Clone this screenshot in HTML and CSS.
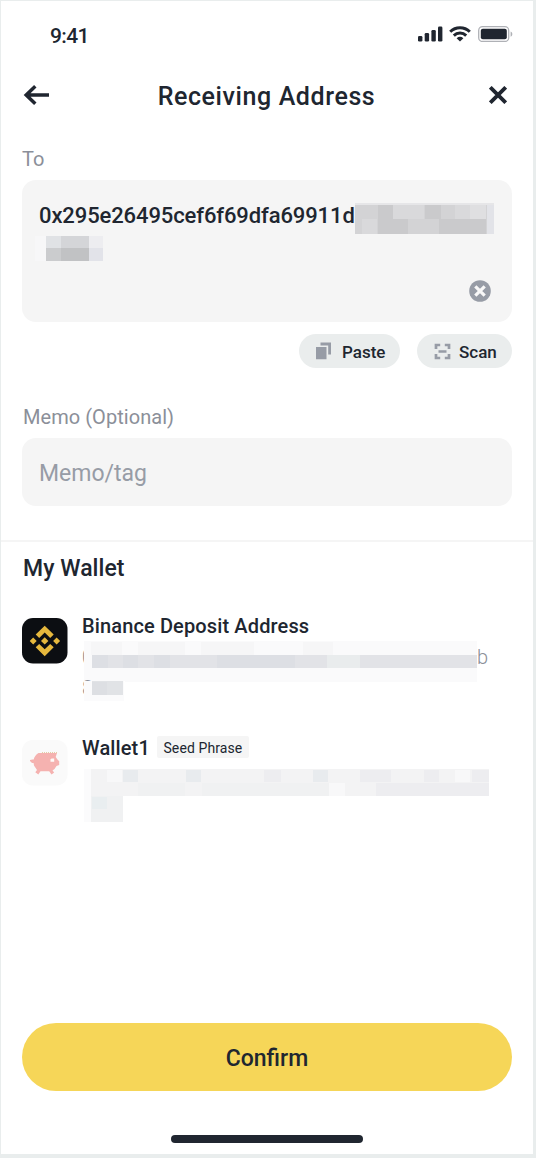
FILE: index.html
```html
<!DOCTYPE html>
<html lang="en">
<head>
<meta charset="utf-8">
<title>Receiving Address</title>
<link rel="stylesheet" href="styles.css">
</head>
<body>
<main class="screen">
  <div class="status">
    <span class="clock">9:41</span>
    <div class="indicators">
      <svg width="25" height="16" viewBox="0 0 25 16" fill="#202630"><rect x="0" y="10" width="4.4" height="5.6" rx="1.3"/><rect x="6.7" y="7" width="4.4" height="8.6" rx="1.3"/><rect x="13.4" y="4" width="4.4" height="11.6" rx="1.3"/><rect x="20" y="0.5" width="4.4" height="15.1" rx="1.3"/></svg>
      <svg class="wifi" width="22" height="16" viewBox="0 0 22 16" fill="none" stroke="#202630" stroke-width="3"><path d="M1.2 5.7a14 14 0 0 1 19.6 0"/><path d="M4.8 9.6a9 9 0 0 1 12.4 0"/><path d="M7.6 12.2a5.4 5.4 0 0 1 6.8 0L11 15.6z" fill="#202630" stroke="none"/></svg>
      <svg class="battery" width="36" height="16" viewBox="0 0 36 16"><rect x=".7" y=".7" width="30" height="14.8" rx="3.8" fill="none" stroke="#afb1b6" stroke-width="1.3"/><rect x="2.8" y="2.8" width="26" height="10.5" rx="2" fill="#202630"/><path d="M32.6 5.5c2.3.8 2.3 4.4 0 5.2z" fill="#afb1b6"/></svg>
    </div>
  </div>
  <header class="nav">
    <svg width="27" height="22" viewBox="0 0 27 22" fill="none" stroke="#202630" stroke-width="3.5"><path d="M27 11H4.5M13.3 2.2 4.2 11l9.1 8.8"/></svg>
    <h1 class="title">Receiving Address</h1>
    <svg class="close" width="18" height="18" viewBox="0 0 18 18" stroke="#202630" stroke-width="3.8"><path d="m1.3 1.3 15.4 15.4M16.7 1.3 1.3 16.7"/></svg>
  </header>
  <label class="label label-to">To</label>
  <section class="address-box">
    <div class="address-line"><span class="address">0x295e26495cef6f69dfa69911d</span><svg class="mask" width="139" height="31" viewBox="0 0 139 31" shape-rendering="crispEdges"><path fill="#e6e6e8" d="M0 0h139v31H0z"/><path fill="#d3d3d5" d="M0 2h132v29H0z"/><path fill="#cacacc" d="M23 2h15v29H23zM38 16h15v15H38zM70 2h16v14H70zM84 16h47v15H84z"/><path fill="#d9d9db" d="M38 2h31v14H38zM7 16h15v15H7zM100 2h15v14h-15z"/><path fill="#dfdfe1" d="M115 2h16v14h-16z"/><path fill="#e2e3e8" d="M132 2h7v29h-7z"/></svg></div>
    <svg class="mask-tail" width="68" height="25" viewBox="0 0 68 25" shape-rendering="crispEdges"><path fill="#f7f7f8" d="M0 0h12v25H0z"/><path fill="#e0e2e5" d="M11 0h16v12H11z"/><path fill="#d4d5d8" d="M26 0h28v12H26z"/><path fill="#ededf0" d="M54 0h14v12H54z"/><path fill="#cbccce" d="M11 12h15v13H11z"/><path fill="#c1c2c4" d="M26 12h28v13H26z"/><path fill="#e2e3e9" d="M54 12h14v13H54z"/></svg>
    <svg class="clear" width="22" height="22" viewBox="0 0 22 22"><circle cx="11" cy="11" r="10.8" fill="#979ca6"/><path d="m6.3 6.3 9.4 9.4m0-9.4-9.4 9.4" stroke="#f8f8f8" stroke-width="3.2"/></svg>
  </section>
  <div class="actions">
    <button class="chip paste"><svg width="17" height="18" viewBox="0 0 17 18" fill="#979ca6"><path d="M1 5h10.5v12.3H1zM5.5.6H16v12h-2.8V3.4H5.5z"/></svg><span>Paste</span></button>
    <button class="chip scan"><svg width="17" height="17" viewBox="0 0 17 17" fill="none" stroke="#979ca6" stroke-width="2.7"><path d="M2 6V2h4.2M10.8 2H15v4M2 11v4h4.2M10.8 15H15v-4M4.5 8.5h8"/></svg><span>Scan</span></button>
  </div>
  <label class="label label-memo">Memo (Optional)</label>
  <div class="memo-box">Memo/tag</div>
  <section class="wallets">
    <h2 class="heading">My Wallet</h2>
    <article class="wallet first">
      <svg class="avatar" width="46" height="46" viewBox="0 0 46 46"><rect width="45.5" height="45.5" rx="11" fill="#0c0e12"/><g fill="#e6b83d"><path d="m22.7 7.7 9 8.8-3.5 3.4-5.5-5.4-5.5 5.4-3.5-3.4zM22.7 38.2l-9-8.9 3.5-3.4 5.5 5.4 5.5-5.4 3.5 3.4zM22.7 19.2l3.7 3.7-3.7 3.7-3.7-3.7zM11.2 19.4l3.5 3.5-3.5 3.5-3.5-3.5zM34.6 19.4l3.5 3.5-3.5 3.5-3.5-3.5z"/></g></svg>
      <div class="details">
        <h3 class="name deposit">Binance Deposit Address</h3>
        <div class="hidden-row"><span class="sliver">0</span><svg class="cover" width="393" height="42" viewBox="1 0 393 42"><path fill="#fff" d="M0 0h394v42H0z"/><path fill="#fafafb" d="M1 0h393v41H1z"/><path fill="#f6f6f7" d="M8 1h31v13H8zM55 1h47v13H55zM118 1h53v13h-53zM220 1h30v13h-30z"/><path fill="#e2e3e7" d="M9 14h385v13H9z"/><path fill="#dddfe4" d="M9 14h16v13H9zM40 14h15v13H40zM71 14h16v13H71zM134 14h78v13h-78z"/><path fill="#e9eced" d="M244 14h33v13h-33z"/></svg><span class="last">b</span></div>
        <div class="hidden-row second"><span class="sliver">8</span><svg class="cover" width="41" height="20" viewBox="1 0 41 20"><path fill="#fff" d="M0 0h42v20H0z"/><path fill="#fbfbfc" d="M1 0h40v20H1z"/><path fill="#e1e3e6" d="M9 0h31v14H9z"/><path fill="#dddfe3" d="M9 1h15v13H9z"/></svg></div>
      </div>
    </article>
    <article class="wallet">
      <svg class="avatar" width="46" height="46" viewBox="0 0 46 46"><rect width="45.5" height="45.5" rx="11" fill="#fafafa"/><path fill="#f5b2b0" d="M16.5 13H35l-1.3 4 2.3 3.300 1.200.7v4l-2.700 1-2 3-2 1.500 1.700 2-2.700 2-2.300-3.300h-8.700l-2.200 3.300-3-2.200 1.700-2.300-3-4.500-.4-2.500H10l-2-2v-1l2.500-.5h1.200C12 17.500 14 14.500 16.500 13z"/><path d="M20 12.500h15" stroke="#e2cfa8" stroke-dasharray="1 1"/><path fill="#fffaf8" d="M28.500 19.500l1-1h2.700v3.200h-3.700z"/></svg>
      <div class="details">
        <div class="name-row"><h3 class="name">Wallet1</h3><span class="tag">Seed Phrase</span></div>
        <svg class="mask-block" width="408" height="54" viewBox="0 0 408 54" shape-rendering="crispEdges"><path fill="#fbfbfc" d="M2 0h8v53H2z"/><path fill="#f3f3f4" d="M9 0h398v27H9z"/><path fill="#f0f1f2" d="M9 27h32v26H9zM56 14h47v13H56zM120 14h128v13H120z"/><path fill="#e8ebee" d="M41 1h15v12H41zM104 1h15v12h-15zM231 1h15v12h-15z"/><path fill="#ededf0" d="M182 1h17v12h-17zM278 1h31v12h-31zM342 1h15v12h-15zM390 1h17v12h-17zM294 14h113v13H294z"/><path fill="#e9eef0" d="M10 28h15v12H10z"/><path fill="#f8f8f9" d="M247 14h16v13h-16zM373 1h15v12h-15zM25 1h15v12H25z"/></svg>
      </div>
    </article>
  </section>
  <button class="confirm">Confirm</button>
  <div class="home-bar"></div>
</main>
</body>
</html>
```
FILE: styles.css
```css
* { box-sizing: border-box; }
body {
  margin: 0;
  padding: 1px 3px 4px 1px;
  height: 1158px;
  overflow: hidden;
  background: #e9eded;
  color: #202630;
  font-family: Roboto, "Open Sans", sans-serif;
}
svg { display: block; flex: none; }
h1, h2, h3 { margin: 0; font-weight: 500; white-space: nowrap; }
button { border: 0; padding: 0; font: inherit; color: inherit; }
.screen {
  display: flex;
  flex-direction: column;
  width: 532px;
  height: 1153px;
  padding: 0 21px;
  background: #fff;
}
.status {
  display: flex;
  justify-content: space-between;
  align-items: center;
  height: 68px;
  padding: 0 0 0 27px;
}
.clock { font-size: 21px; font-weight: 500; line-height: 24px; letter-spacing: -.6px; padding: 1px 0 0 1px; }
.indicators { display: flex; align-items: center; margin: 0 -2px 2px 0; }
.wifi { margin-left: 6px; }
.battery { margin-left: 7px; }
.nav { display: flex; align-items: center; justify-content: space-between; height: 52px; padding: 0 5px 0 0; }
.title { font-size: 25px; line-height: 30px; letter-spacing: .6px; margin-left: -5px; padding-top: 3px; }
.label { color: #8b8f99; font-size: 20px; line-height: 24px; white-space: nowrap; }
.label-to { margin-top: 26px; }
.address-box {
  display: flex;
  flex-direction: column;
  width: 490px;
  height: 142px;
  margin-top: 9px;
  padding: 23px 18px 20px 17px;
  border-radius: 14px;
  background: #f5f5f5;
}
.address-line { display: flex; height: 31px; }
.address { width: 316px; flex: none; font-size: 22px; font-weight: 500; line-height: 26px; letter-spacing: -.11px; white-space: nowrap; }
.mask-tail { margin-top: 2px; margin-left: -4px; }
.clear { margin: auto 3px 0 auto; }
.actions { display: flex; justify-content: flex-end; gap: 17px; width: 490px; margin-top: 12px; }
.chip { display: flex; align-items: center; height: 34px; border-radius: 17px; background: #eaeded; font-size: 17px; font-weight: 500; line-height: 20px; }
.paste { width: 101px; padding-left: 16px; gap: 10px; }
.scan { width: 95px; padding-left: 17px; gap: 8px; }
.chip span { padding-top: 1px; }
.label-memo { margin-top: 37px; letter-spacing: .05px; padding-left: 1px; }
.memo-box {
  width: 490px;
  height: 68px;
  margin-top: 9px;
  padding-left: 17px;
  border-radius: 14px;
  background: #f5f5f5;
  color: #979ca6;
  font-size: 23px;
  line-height: 72px;
}
.wallets { margin: 34px -21px 0; padding: 0 21px; border-top: 2px solid #f5f5f5; }
.heading { margin-top: 12px; font-size: 23px; line-height: 30px; letter-spacing: .05px; padding-left: 1px; }
.wallet { display: flex; height: 122px; gap: 14px; }
.first { margin-top: 34px; }
.details { width: 430px; }
.name { font-size: 20px; line-height: 24px; margin-top: -4px; letter-spacing: .13px; }
.hidden-row { display: flex; height: 42px; margin-top: 3px; color: #8b8f99; font-size: 20px; line-height: 32px; }
.hidden-row.second { height: 20px; margin-top: -2px; line-height: 15px; }
.sliver { width: 12px; flex: none; }
.cover { margin-left: -10px; }
.last { font-weight: 300; }
.name-row { display: flex; height: 24px; gap: 7px; }
.tag { width: 92px; height: 22px; margin-top: -4px; border-radius: 2px; background: #f5f5f5; font-size: 14px; line-height: 24px; letter-spacing: .1px; text-align: center; white-space: nowrap; }
.mask-block { margin-top: 5px; }
.confirm { width: 490px; height: 68px; margin-top: auto; flex: none; border-radius: 34px; background: #f6d658; font-size: 23px; font-weight: 500; line-height: 70px; padding-top: 1px; }
.home-bar { flex: none; align-self: center; width: 192px; height: 8px; margin: 44px 0 11px; border-radius: 4px; background: #202630; }
```
